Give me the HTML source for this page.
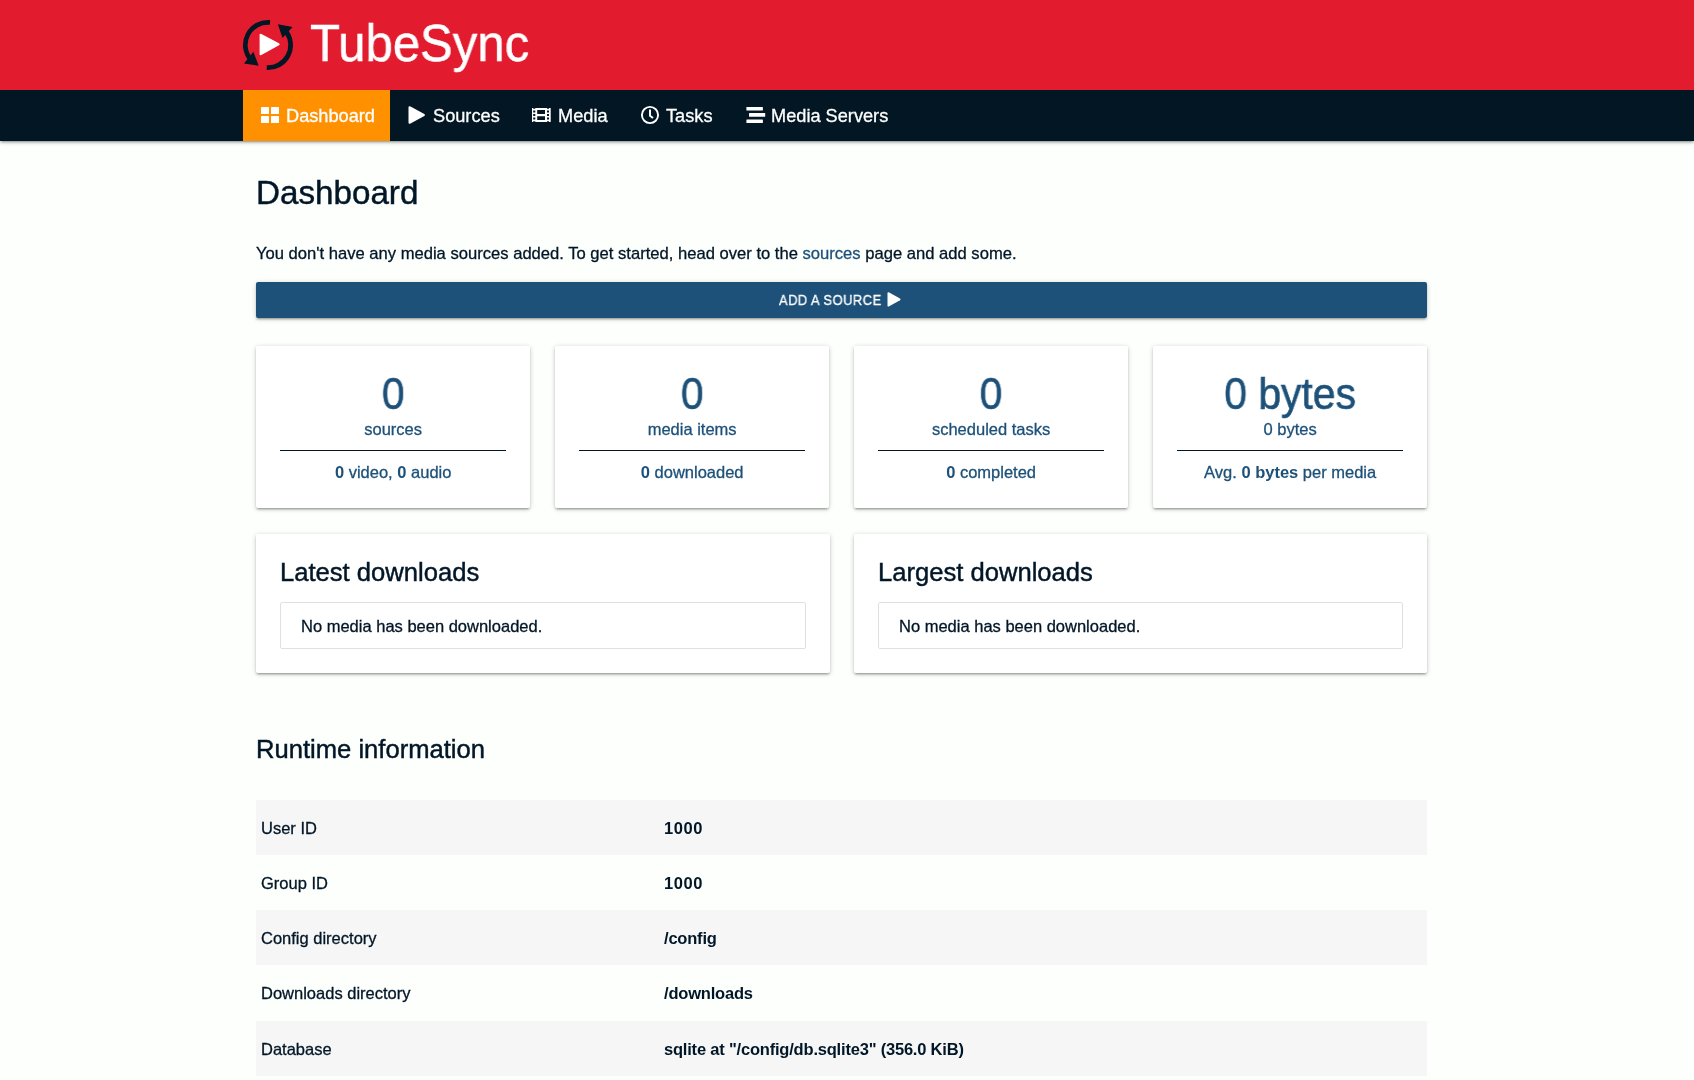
<!DOCTYPE html>
<html>
<head>
<meta charset="utf-8">
<style>
html,body{margin:0;padding:0;}
body{width:1694px;height:1080px;overflow:hidden;background:#fdfffc;font-family:"Liberation Sans",sans-serif;color:#011627;position:relative;-webkit-text-stroke-width:0.3px;}
.abs{position:absolute;white-space:nowrap;will-change:transform;}
#title,.ni,.card>div,.box span,.dl h2,.tr span{will-change:transform;}
#hdr{position:absolute;left:0;top:0;width:1694px;height:90px;background:#e21c2e;z-index:3;}
#nav{position:absolute;left:0;top:90px;width:1694px;height:51px;background:#021624;box-shadow:0 2px 2px 0 rgba(0,0,0,.14),0 3px 1px -2px rgba(0,0,0,.12),0 1px 5px 0 rgba(0,0,0,.2);z-index:2;}
#title{position:absolute;left:310px;top:-2px;font-size:52px;line-height:90px;color:#fff;transform:scaleX(0.944);transform-origin:0 0;}
.ni{position:absolute;top:0.8px;height:51px;line-height:51px;font-size:18.2px;color:#fff;}
.act{background:#ff9100;}
h1{margin:0;font-weight:400;}
.card{position:absolute;background:#fff;border-radius:2px;box-shadow:0 2px 2px 0 rgba(0,0,0,.14),0 3px 1px -2px rgba(0,0,0,.12),0 1px 5px 0 rgba(0,0,0,.2);}
.stat{top:346px;width:274.3px;height:162px;color:#1d5179;text-align:center;}
.big{position:absolute;left:0;right:0;font-size:44px;line-height:50px;top:23px;transform:scaleX(0.93);}
.lbl{position:absolute;left:0;right:0;font-size:16.5px;line-height:24px;top:70.5px;}
.hr{position:absolute;left:24px;right:24px;top:104px;height:1px;border-top:1px solid #011627;}
.sub{position:absolute;left:0;right:0;font-size:16.5px;line-height:24px;top:114px;}
.sub b{font-weight:700;}
.dl{top:534px;width:573.5px;height:139px;}
.dl h2{position:absolute;left:24px;top:20px;margin:0;font-weight:400;font-size:25.6px;line-height:36px;white-space:nowrap;}
.box{position:absolute;left:24px;right:24px;top:68px;height:45px;border:1px solid #e0e0e0;border-radius:2px;}
.box span{position:absolute;left:20px;top:11px;font-size:16.5px;line-height:24px;white-space:nowrap;}
.tr{position:absolute;left:256px;width:1171px;height:55px;}
.tr.s{background:#f6f6f6;}
.tr .k{position:absolute;left:5px;top:0.8px;line-height:55.2px;font-size:16.5px;}
.tr .v{position:absolute;left:408px;top:0.8px;line-height:55.2px;font-size:16.5px;font-weight:700;letter-spacing:-0.2px;}
#title{-webkit-text-stroke-width:0.5px;}
h1.abs,h2.abs,.dl h2{-webkit-text-stroke-width:0.45px;}
.big{-webkit-text-stroke-width:0.6px;}
.tr .v,.sub b{-webkit-text-stroke-width:0;}
</style>
</head>
<body>
<div id="hdr">
  <svg style="position:absolute;left:0;top:0" width="320" height="90" viewBox="0 0 320 90">
    <!-- logo -->
    <path d="M270 22.4 A22.6 22.6 0 0 0 250.69 59.53" fill="none" stroke="#021624" stroke-width="4.7"/>
    <path d="M243.9 63.4 L253.4 51.85 L258.7 65.8 Z" fill="#021624"/>
    <path d="M266.75 67.6 A22.6 22.6 0 0 0 286.51 32.04" fill="none" stroke="#021624" stroke-width="4.7"/>
    <path d="M277.9 24.3 L292.6 27.1 L282.5 38.1 Z" fill="#021624"/>
    <path d="M259.6 35 Q259.6 33 261.4 34 L279 43.2 Q280.6 44.3 279 45.3 L261.4 55 Q259.6 56 259.6 54 Z" fill="#fff"/>
  </svg>
  <div id="title">TubeSync</div>
</div>
<div id="nav">
  <div style="position:absolute;left:243px;top:0;width:147px;height:51px;background:#ff9100;"></div>
  <svg style="position:absolute;left:0;top:0" width="900" height="51" viewBox="0 90 900 51">
    <g fill="#fff">
      <rect x="261" y="107" width="8" height="7" rx="0.6"/>
      <rect x="271" y="107" width="8" height="7" rx="0.6"/>
      <rect x="261" y="116" width="8" height="7" rx="0.6"/>
      <rect x="271" y="116" width="8" height="7" rx="0.6"/>
      <path d="M408.5 107.5 Q408.5 105.6 410.5 106.6 L424.3 114 Q425.8 115 424.3 116 L410.5 123.4 Q408.5 124.4 408.5 122.5 Z"/>
      <path fill-rule="evenodd" d="M532 108 H550.7 V122 H532 Z M537.2 110.1 H545 V113.9 H537.2 Z M537.2 116.2 H545 V120 H537.2 Z M533.2 110.5 H535.3 V112.5 H533.2 Z M533.2 114 H535.3 V116 H533.2 Z M533.2 117.4 H535.3 V119.4 H533.2 Z M547 110.5 H549 V112.5 H547 Z M547 114 H549 V116 H547 Z M547 117.4 H549 V119.4 H547 Z M533.2 108 H535.3 V108.8 H533.2 Z M547 108 H549 V108.8 H547 Z M533.2 121.2 H535.3 V122 H533.2 Z M547 121.2 H549 V122 H547 Z"/>
      <rect x="746.4" y="107" width="16.5" height="3.5" rx="0.5"/>
      <rect x="749" y="113" width="16.2" height="3.8" rx="0.5"/>
      <rect x="746.4" y="119.6" width="16.5" height="3.5" rx="0.5"/>
    </g>
    <circle cx="650" cy="115" r="8.1" fill="none" stroke="#fff" stroke-width="1.9"/>
    <path d="M650 109.6 V115.8 L653 118" fill="none" stroke="#fff" stroke-width="2"/>
  </svg>
  <div class="ni" style="left:286px">Dashboard</div>
  <div class="ni" style="left:432.7px">Sources</div>
  <div class="ni" style="left:557.7px">Media</div>
  <div class="ni" style="left:666px">Tasks</div>
  <div class="ni" style="left:771px">Media Servers</div>
</div>

<h1 class="abs" style="left:256px;top:170.5px;font-size:33.2px;line-height:44px;">Dashboard</h1>
<div class="abs" style="left:256px;top:241.6px;font-size:16.6px;line-height:24px;">You don't have any media sources added. To get started, head over to the <span style="color:#1d5179">sources</span> page and add some.</div>
<div class="abs" style="left:256px;top:282px;width:1171px;height:36px;background:#1d5179;border-radius:2px;box-shadow:0 2px 2px 0 rgba(0,0,0,.14),0 3px 1px -2px rgba(0,0,0,.12),0 1px 5px 0 rgba(0,0,0,.2);"></div>
<div class="abs" style="left:779px;top:282.3px;line-height:36px;font-size:14px;letter-spacing:0.54px;transform:scaleX(0.92);transform-origin:0 0;color:#fff;">ADD A SOURCE</div>
<svg class="abs" style="left:880px;top:285px" width="30" height="30" viewBox="880 285 30 30"><path d="M887.5 293.5 Q887.5 291.7 889.2 292.6 L900 298.6 Q901.3 299.5 900 300.3 L889.2 306.3 Q887.5 307.2 887.5 305.4 Z" fill="#fff"/></svg>

<div class="card stat" style="left:256px"><div class="big">0</div><div class="lbl">sources</div><div class="hr"></div><div class="sub"><b>0</b> video, <b>0</b> audio</div></div>
<div class="card stat" style="left:554.7px"><div class="big">0</div><div class="lbl">media items</div><div class="hr"></div><div class="sub"><b>0</b> downloaded</div></div>
<div class="card stat" style="left:854px;width:274.2px"><div class="big">0</div><div class="lbl">scheduled tasks</div><div class="hr"></div><div class="sub"><b>0</b> completed</div></div>
<div class="card stat" style="left:1152.7px"><div class="big">0 bytes</div><div class="lbl">0 bytes</div><div class="hr"></div><div class="sub">Avg. <b>0 bytes</b> per media</div></div>

<div class="card dl" style="left:256px"><h2>Latest downloads</h2><div class="box"><span>No media has been downloaded.</span></div></div>
<div class="card dl" style="left:853.6px;width:573.4px"><h2>Largest downloads</h2><div class="box"><span>No media has been downloaded.</span></div></div>

<h2 class="abs" style="margin:0;font-weight:400;left:256px;top:731px;font-size:25.6px;line-height:36px;">Runtime information</h2>

<div class="tr s" style="top:800px"><span class="k">User ID</span><span class="v" style="letter-spacing:0.6px">1000</span></div>
<div class="tr" style="top:855px"><span class="k">Group ID</span><span class="v" style="letter-spacing:0.6px">1000</span></div>
<div class="tr s" style="top:910px"><span class="k">Config directory</span><span class="v">/config</span></div>
<div class="tr" style="top:965px;height:56px"><span class="k">Downloads directory</span><span class="v">/downloads</span></div>
<div class="tr s" style="top:1021px"><span class="k">Database</span><span class="v">sqlite at "/config/db.sqlite3" (356.0 KiB)</span></div>
</body>
</html>
